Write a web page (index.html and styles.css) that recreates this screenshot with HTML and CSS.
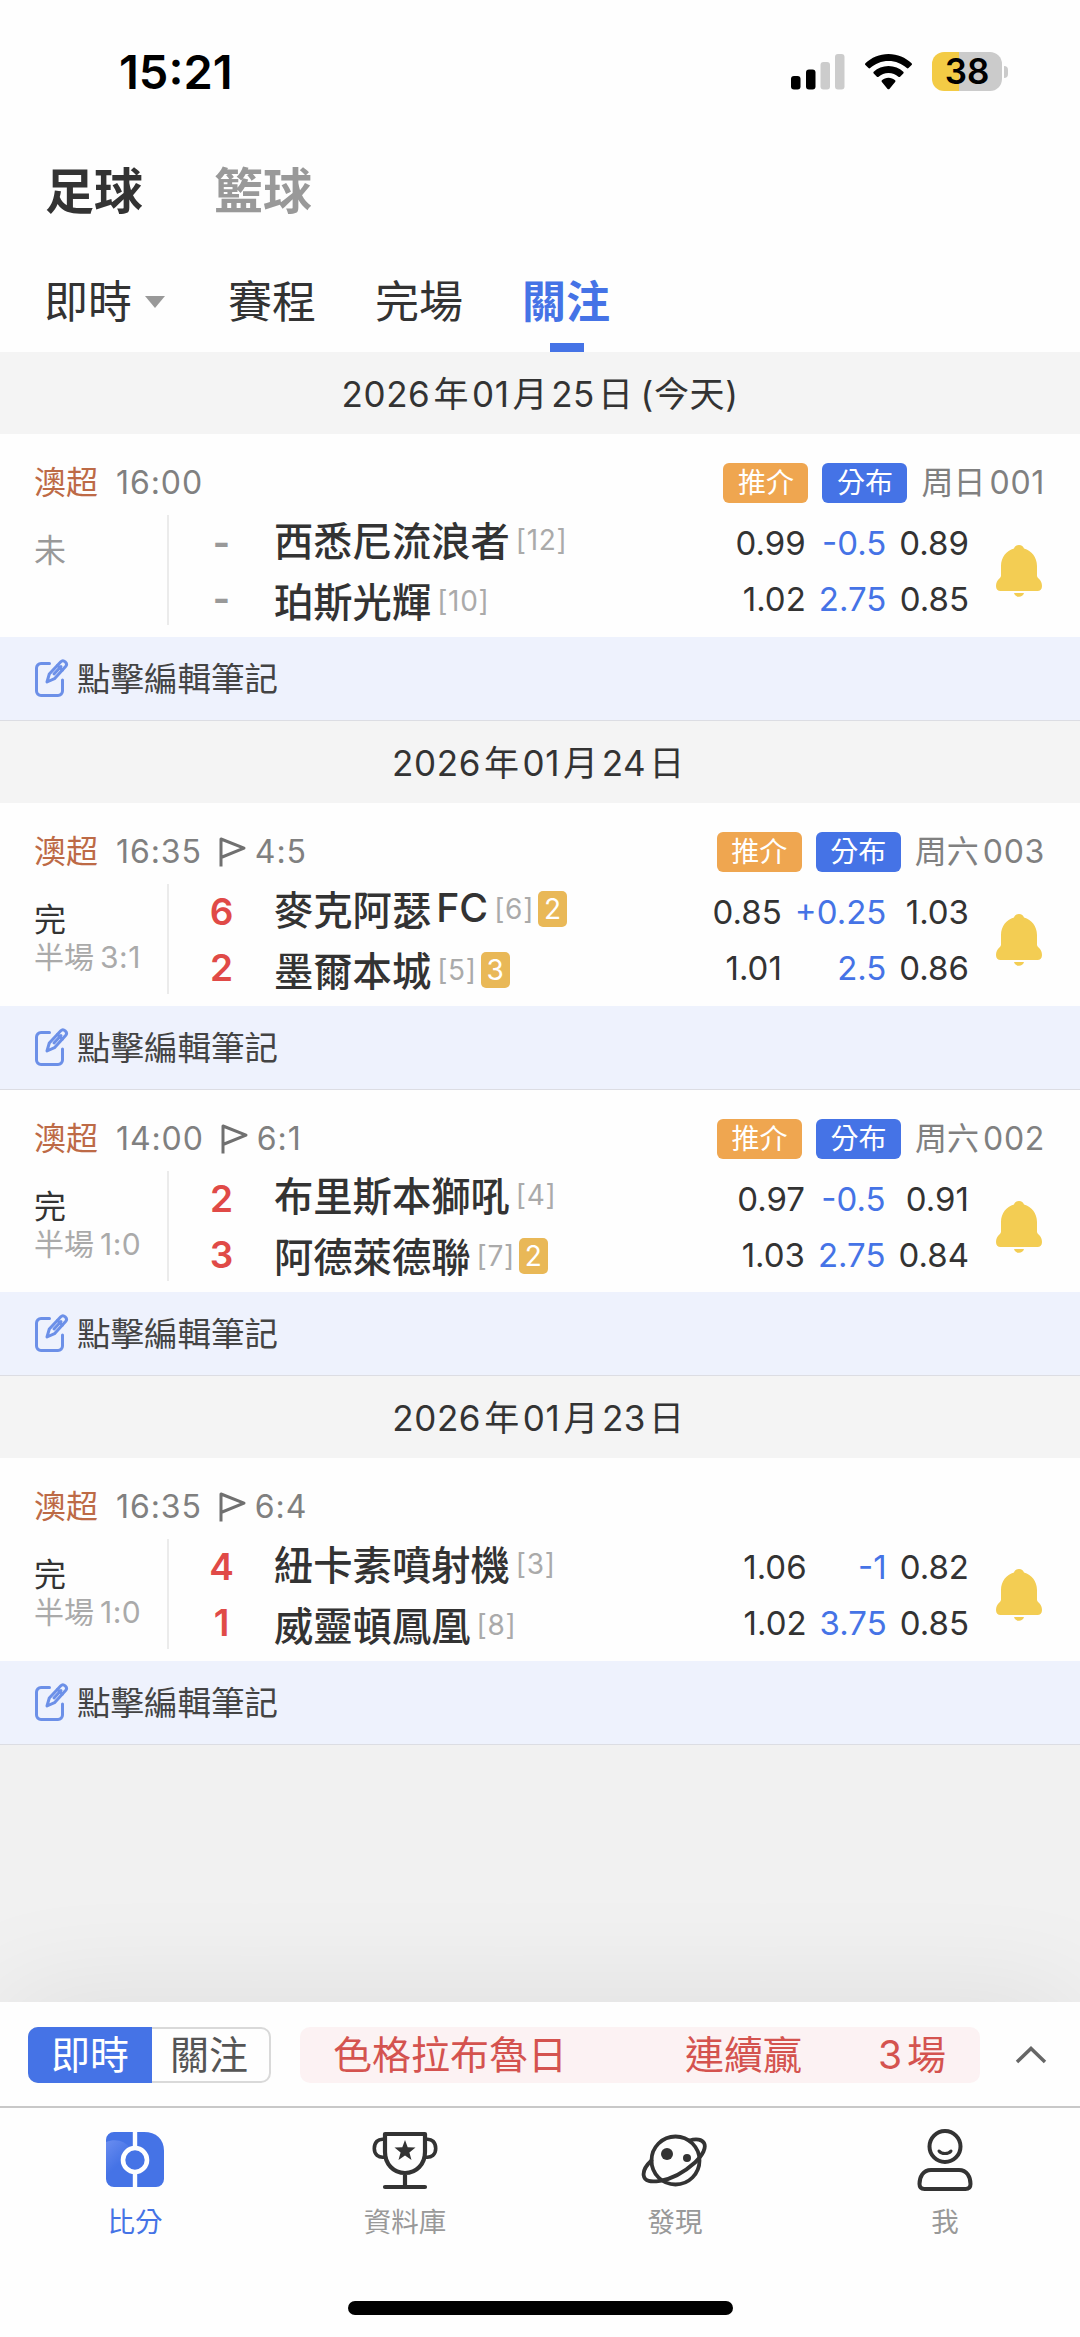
FILE: index.html
```html
<!DOCTYPE html>
<html lang="zh-Hant">
<head>
    <meta charset="UTF-8">
    <meta name="viewport" content="width=device-width, initial-scale=1.0">
    <title>足球比分 - 關注</title>
    <link rel="stylesheet" href="styles.css">
</head>
<body>
    <!-- Shared icons -->
    <svg class="sprite">
        <symbol id="bell" viewBox="0 0 46 52">
            <path d="M23 0c-2.600 0-4.500 1.500-5 3.600C10.300 5.800 5 12.500 5 21v9.500c0 1.200-.5 2-1.600 3C1.300 35.400 0 37.800 0 41c0 3.300 1.800 5 4.600 5h36.800c2.800 0 4.600-1.700 4.600-5 0-3.200-1.300-5.600-3.400-7.500-1.100-1-1.600-1.800-1.600-3V21C41 12.500 35.700 5.800 28 3.600 27.500 1.500 25.600 0 23 0z"/>
            <path d="M18 48h10c-.8 2.500-2.600 3.800-5 3.800S18.800 50.500 18 48z"/>
        </symbol>
        <symbol id="edit" viewBox="0 0 34 38">
            <path d="M14.500 4.500H6A4.500 4.500 0 0 0 1.500 9v23A4.500 4.500 0 0 0 6 36.500h17a4.500 4.500 0 0 0 4.500-4.500V21"/>
            <path d="M12 23l2.300-8L25.800 2.700c2.700-2.700 7.400 1.500 5 4.500L19.500 19.700z"/>
            <path d="M22.500 6.500l5 4.600"/>
            <path d="M19 15l7-7.500"/>
        </symbol>
        <symbol id="flag" viewBox="0 0 28 30">
            <path d="M3 29.500V2L26 11.200 3 20.500"/>
        </symbol>
    </svg>

    <header>
        <div class="status-bar">
            <span class="clock">15:21</span>
            <div class="status-icons">
                <svg class="signal" viewBox="0 0 54 36">
                    <rect x="0" y="22" width="9.500" height="13.500" rx="3"/>
                    <rect x="15" y="15.500" width="9.500" height="20" rx="3"/>
                    <rect class="off" x="29.500" y="8" width="9.500" height="27.500" rx="3"/>
                    <rect class="off" x="44" y="0" width="9.500" height="35.500" rx="3"/>
                </svg>
                <svg class="wifi" viewBox="0 0 47 36">
                    <path d="M23.500 0C14.500 0 6.400 3.500.4 9.300c-.5.500-.5 1.200 0 1.700l3.100 3.100c.5.500 1.200.5 1.700 0C10 9.500 16.400 6.900 23.500 6.900S37 9.500 41.800 14.100c.5.500 1.200.5 1.700 0l3.100-3.100c.5-.5.5-1.200 0-1.700C40.600 3.500 32.500 0 23.500 0z"/>
                    <path d="M23.500 12c-5.700 0-10.900 2.200-14.800 5.800-.5.500-.5 1.200 0 1.700l3.200 3.200c.5.500 1.200.5 1.700 0 2.600-2.400 6.100-3.800 9.900-3.800s7.300 1.400 9.900 3.800c.5.500 1.200.5 1.700 0l3.200-3.200c.5-.5.5-1.200 0-1.700C34.400 14.200 29.200 12 23.500 12z"/>
                    <path d="M23.500 23.800c-2.500 0-4.800.9-6.600 2.500-.5.500-.5 1.200 0 1.700l5.700 6.900c.5.600 1.300.6 1.800 0L30.100 28c.5-.5.5-1.200 0-1.700-1.800-1.600-4.100-2.500-6.600-2.500z"/>
                </svg>
                <div class="battery">38</div>
                <div class="battery-tip"></div>
            </div>
        </div>
        <nav class="sports">
            <a class="active">足球</a>
            <a>籃球</a>
        </nav>
        <nav class="tabs">
            <a>即時<i class="caret"></i></a>
            <a>賽程</a>
            <a>完場</a>
            <a class="active">關注</a>
        </nav>
    </header>

    <main>
        <h2 class="date">2026<b>年</b>01<b>月</b>25<b>日</b><em>(今天)</em></h2>
        <section class="match">
            <div class="match-head">
                <span class="league">澳超</span>
                <span class="time">16:00</span>
                <div class="match-tags">
                    <span class="tag tip">推介</span>
                    <span class="tag dist">分布</span>
                    <span class="serial">周日<em>001</em></span>
                </div>
            </div>
            <div class="match-body">
                <div class="state pending">未</div>
                <div class="score none"><span>-</span><span>-</span></div>
                <div class="teams">
                    <div class="team">西悉尼流浪者<span class="rank">[12]</span></div>
                    <div class="team">珀斯光輝<span class="rank">[10]</span></div>
                </div>
                <div class="odds">
                    <span>0.99</span><span class="line">-0.5</span><span>0.89</span>
                    <span>1.02</span><span class="line">2.75</span><span>0.85</span>
                </div>
                <svg class="bell"><use href="#bell"/></svg>
            </div>
        </section>
        <div class="note"><svg class="edit"><use href="#edit"/></svg><span>點擊編輯筆記</span></div>

        <h2 class="date">2026<b>年</b>01<b>月</b>24<b>日</b></h2>
        <section class="match">
            <div class="match-head">
                <span class="league">澳超</span>
                <span class="time">16:35</span>
                <svg class="flag"><use href="#flag"/></svg>
                <span class="corner">4:5</span>
                <div class="match-tags">
                    <span class="tag tip">推介</span>
                    <span class="tag dist">分布</span>
                    <span class="serial">周六<em>003</em></span>
                </div>
            </div>
            <div class="match-body">
                <div class="state">完<small>半場<em>3:1</em></small></div>
                <div class="score"><span>6</span><span>2</span></div>
                <div class="teams">
                    <div class="team">麥克阿瑟<em>FC</em><span class="rank">[6]</span><span class="card">2</span></div>
                    <div class="team">墨爾本城<span class="rank">[5]</span><span class="card">3</span></div>
                </div>
                <div class="odds">
                    <span>0.85</span><span class="line">+0.25</span><span>1.03</span>
                    <span>1.01</span><span class="line">2.5</span><span>0.86</span>
                </div>
                <svg class="bell"><use href="#bell"/></svg>
            </div>
        </section>
        <div class="note"><svg class="edit"><use href="#edit"/></svg><span>點擊編輯筆記</span></div>

        <section class="match">
            <div class="match-head">
                <span class="league">澳超</span>
                <span class="time">14:00</span>
                <svg class="flag"><use href="#flag"/></svg>
                <span class="corner">6:1</span>
                <div class="match-tags">
                    <span class="tag tip">推介</span>
                    <span class="tag dist">分布</span>
                    <span class="serial">周六<em>002</em></span>
                </div>
            </div>
            <div class="match-body">
                <div class="state">完<small>半場<em>1:0</em></small></div>
                <div class="score"><span>2</span><span>3</span></div>
                <div class="teams">
                    <div class="team">布里斯本獅吼<span class="rank">[4]</span></div>
                    <div class="team">阿德萊德聯<span class="rank">[7]</span><span class="card">2</span></div>
                </div>
                <div class="odds">
                    <span>0.97</span><span class="line">-0.5</span><span>0.91</span>
                    <span>1.03</span><span class="line">2.75</span><span>0.84</span>
                </div>
                <svg class="bell"><use href="#bell"/></svg>
            </div>
        </section>
        <div class="note"><svg class="edit"><use href="#edit"/></svg><span>點擊編輯筆記</span></div>

        <h2 class="date">2026<b>年</b>01<b>月</b>23<b>日</b></h2>
        <section class="match">
            <div class="match-head">
                <span class="league">澳超</span>
                <span class="time">16:35</span>
                <svg class="flag"><use href="#flag"/></svg>
                <span class="corner">6:4</span>
            </div>
            <div class="match-body">
                <div class="state">完<small>半場<em>1:0</em></small></div>
                <div class="score"><span>4</span><span>1</span></div>
                <div class="teams">
                    <div class="team">紐卡素噴射機<span class="rank">[3]</span></div>
                    <div class="team">威靈頓鳳凰<span class="rank">[8]</span></div>
                </div>
                <div class="odds">
                    <span>1.06</span><span class="line">-1</span><span>0.82</span>
                    <span>1.02</span><span class="line">3.75</span><span>0.85</span>
                </div>
                <svg class="bell"><use href="#bell"/></svg>
            </div>
        </section>
        <div class="note"><svg class="edit"><use href="#edit"/></svg><span>點擊編輯筆記</span></div>
    </main>

    <div class="live-bar">
        <div class="switch">
            <span class="on">即時</span>
            <span>關注</span>
        </div>
        <div class="streak">
            <span class="streak-team">色格拉布魯日</span>
            <span>連續贏</span>
            <span class="streak-count"><em>3</em>場</span>
        </div>
        <svg class="chevron" viewBox="0 0 32 18"><path d="M2 16L16 2.500 30 16"/></svg>
    </div>

    <footer>
        <nav class="bottom-nav">
            <a class="active">
                <svg viewBox="0 0 68 64">
                    <defs>
                        <linearGradient id="shine" x1="0" y1="0" x2="0.600" y2="1">
                            <stop offset="0" stop-color="#6a8df0"/>
                            <stop offset="0.700" stop-color="#4573e6"/>
                        </linearGradient>
                    </defs>
                    <path d="M13 4h30c12 0 20 7 20 19v28a8 8 0 0 1-8 8H13a8 8 0 0 1-8-8V12a8 8 0 0 1 8-8z" fill="#4573e6"/>
                    <path d="M5 14c10-4 19-1 24 6l-5 30H5z" fill="url(#shine)"/>
                    <path d="M34 3v17M34 46v14" stroke="#fefefe" stroke-width="4.400"/>
                    <circle cx="34" cy="32" r="12" fill="#4573e6" stroke="#fefefe" stroke-width="4.600"/>
                </svg>
                比分
            </a>
            <a>
                <svg class="stroke" viewBox="0 0 68 64">
                    <path d="M14 6h40v18c0 12-8.500 21-20 21s-20-9-20-21zM34 45v13M14 59h40" stroke-width="4.200"/>
                    <path d="M14 11.500C6.500 10 3.300 15 3.300 20.500S7 30.500 14.500 29M54 11.500c7.500-1.500 10.700 3.500 10.700 9s-3.700 10-11.200 8.500" stroke-width="3.600"/>
                    <path class="solid" d="M34 12l2.700 7.300 7.800.3-6.100 4.800 2.100 7.500-6.500-4.300-6.500 4.300 2.100-7.500-6.100-4.800 7.800-.3z"/>
                </svg>
                資料庫
            </a>
            <a>
                <svg class="stroke" viewBox="0 0 68 64">
                    <circle cx="34.500" cy="32.500" r="24" stroke-width="3.800"/>
                    <path d="M48.500 12.500c7-2.300 12.500-1 14.500 2.500 2.500 4.500-1 12-9 19.500C44 43.500 31 51 19 52.800 10 54.200 3.500 53.500 2.700 47.500 2 43 5 37.500 10.500 32.500" stroke-width="3.800"/>
                    <circle class="solid" cx="26" cy="26" r="6"/>
                    <circle class="solid" cx="46" cy="30" r="4"/>
                </svg>
                發現
            </a>
            <a>
                <svg class="stroke" viewBox="0 0 68 64">
                    <circle cx="34" cy="18.500" r="15.500" stroke-width="4"/>
                    <path d="M28 23c2.500 3.400 9.500 3.400 12 0" stroke-width="3"/>
                    <path d="M20 42h28c8 0 11.500 7 11.500 14 0 3-1.500 5-5 5h-41c-3.500 0-5-2-5-5 0-7 3.500-14 11.500-14z" stroke-width="4"/>
                </svg>
                我
            </a>
        </nav>
        <div class="home-indicator"></div>
    </footer>
</body>
</html>
```
FILE: styles.css
```css
:root {
    --primary: #4573e6;
    --text: #333;
    --muted: #808080;
    --light: #aaa;
    --red: #e04a47;
}

* {
    margin: 0;
    padding: 0;
    box-sizing: border-box;
}

body {
    height: 2337px;
    display: flex;
    flex-direction: column;
    background: #f1f1f1;
    color: var(--text);
    font-family: Inter, 'Noto Sans CJK TC', sans-serif;
    overflow: hidden;
}

em {
    font-style: normal;
}

.sprite {
    position: absolute;
    width: 0;
    height: 0;
}

/* Header */
header {
    height: 352px;
    flex: none;
    background: #fefefe;
}

.status-bar {
    display: flex;
    justify-content: space-between;
    height: 144px;
    padding: 44px 72px 0 119px;
}

.clock {
    font-size: 47px;
    font-weight: 600;
    line-height: 56px;
    color: #000;
}

.status-icons {
    display: flex;
    align-items: center;
    height: 55px;
}

.signal {
    width: 54px;
    height: 36px;
    margin-right: 20px;
}

.signal .off {
    fill: #ccc;
}

.wifi {
    width: 47px;
    height: 36px;
    margin-right: 20px;
}

.battery {
    width: 70px;
    height: 39px;
    border-radius: 12px;
    background: linear-gradient(90deg, #f3cb45 27px, #cbcbcb 27px);
    color: #000;
    font-size: 35px;
    font-weight: 600;
    line-height: 39px;
    text-align: center;
}

.battery-tip {
    width: 4px;
    height: 12px;
    margin-left: 2px;
    border-radius: 0 4px 4px 0;
    background: #cbcbcb;
}

.sports {
    display: flex;
    gap: 71px;
    height: 94px;
    padding-left: 45px;
    font-size: 49px;
    font-weight: 700;
    line-height: 95px;
    color: #999;
}

.sports .active {
    color: var(--text);
}

.tabs {
    display: flex;
    height: 114px;
    padding-left: 44px;
    gap: 59px;
    font-size: 44px;
    line-height: 128px;
}

.tabs a {
    display: flex;
    align-items: center;
    height: 128px;
}

.tabs .active {
    position: relative;
    color: var(--primary);
    font-weight: 700;
}

.tabs .active::after {
    content: '';
    position: absolute;
    left: 28px;
    top: 105px;
    width: 34px;
    height: 9px;
    background: var(--primary);
}

.caret {
    margin: 0 4px 0 13px;
    border: 10px solid transparent;
    border-top: 12px solid #999;
    border-bottom: 0;
}

/* Match list */
.date {
    height: 82.4px;
    background: #f4f4f4;
    font-size: 35px;
    font-weight: 400;
    line-height: 84px;
    text-align: center;
    letter-spacing: 0.6px;
}

.date b {
    font-weight: 400;
    margin: 0 3px;
}

.date em {
    margin-left: 4px;
}

.match {
    height: 202.4px;
    padding: 29px 35px 0 34px;
    background: #fefefe;
}

.match-head {
    display: flex;
    align-items: center;
    height: 40px;
    font-size: 32px;
    line-height: 42px;
    color: var(--muted);
}

.league {
    color: #bd6a46;
}

.time {
    margin-left: 18px;
    letter-spacing: 0.9px;
}

.corner {
    letter-spacing: 0.9px;
}

.flag {
    width: 28px;
    height: 30px;
    margin: 0 9px 0 16px;
    fill: none;
    stroke: #707070;
    stroke-width: 3;
    stroke-linejoin: round;
}

.match-tags {
    display: flex;
    align-items: center;
    margin-left: auto;
}

.tag {
    width: 85px;
    height: 40px;
    margin-right: 14px;
    border-radius: 6px;
    color: #fff;
    font-size: 28px;
    line-height: 41px;
    text-align: center;
}

.tip {
    background: #efa650;
}

.dist {
    background: var(--primary);
}

.serial em {
    margin-left: 4px;
    letter-spacing: 0.7px;
}

.match-body {
    display: flex;
    height: 110px;
    margin-top: 12px;
}

.state {
    width: 135px;
    padding-top: 17px;
    border-right: 2px solid #ebebeb;
    font-size: 32px;
    line-height: 38px;
}

.state.pending {
    color: #999;
}

.state small {
    display: block;
    color: var(--light);
    font-size: 30px;
    line-height: 36px;
}

.state small em {
    margin-left: 6px;
    letter-spacing: 0.5px;
}

.score {
    display: flex;
    flex-direction: column;
    width: 105px;
    color: var(--red);
    font-size: 37px;
    font-weight: 600;
    line-height: 56px;
    text-align: center;
}

.score.none {
    color: #999;
    font-weight: 700;
}

.teams {
    display: flex;
    flex-direction: column;
    justify-content: center;
}

.team {
    display: flex;
    align-items: center;
    height: 61px;
    flex: none;
    padding-bottom: 3px;
    font-size: 39.3px;
    font-weight: 500;
}

.team em {
    margin-left: 5px;
}

.rank {
    margin: 3px 0 0 6px;
    color: var(--light);
    font-size: 28px;
    font-weight: 400;
    letter-spacing: 0.7px;
}

.card {
    width: 29px;
    height: 36px;
    margin: 3px 0 0 4px;
    border-radius: 5px;
    background: #e9b857;
    color: #fff;
    font-size: 28px;
    font-weight: 400;
    line-height: 37px;
    text-align: center;
}

.odds {
    display: grid;
    grid-template-columns: repeat(3, auto);
    column-gap: 13px;
    margin-left: auto;
    font-size: 33px;
    line-height: 56px;
    text-align: right;
}

.odds .line {
    color: var(--primary);
}

.bell {
    width: 46px;
    height: 52px;
    margin: 30px 3px 0 27px;
    fill: #f3cd53;
}

.note {
    display: flex;
    align-items: center;
    height: 84px;
    padding-left: 35px;
    border-bottom: 1px solid #dcdde3;
    background: #eef2fd;
    color: #444;
    font-size: 33.5px;
}

.note span {
    padding-bottom: 3px;
}

.edit {
    width: 34px;
    height: 38px;
    margin-right: 8px;
    fill: none;
    stroke: #6c90e8;
    stroke-width: 3;
    stroke-linecap: round;
    stroke-linejoin: round;
}

/* Live bar */
.live-bar {
    display: flex;
    align-items: center;
    height: 104px;
    margin-top: auto;
    flex: none;
    padding: 2px 33px 0 28px;
    background: #fefefe;
    box-shadow: 0 0 120px rgba(0, 0, 0, 0.09);
    font-size: 39px;
}

.switch {
    display: flex;
    width: 243px;
    height: 56px;
    border: 2px solid #d9d9d9;
    border-radius: 10px;
    color: #555;
    line-height: 52px;
    text-align: center;
}

.switch span {
    flex: 1;
    padding-right: 3px;
}

.switch .on {
    flex: none;
    width: 124px;
    margin: -2px 0 -2px -2px;
    padding: 0;
    border-radius: 10px 0 0 10px;
    background: var(--primary);
    color: #fff;
    line-height: 56px;
}

.streak {
    display: flex;
    width: 680px;
    height: 56px;
    margin-left: 29px;
    padding: 0 34px 0 33px;
    border-radius: 10px;
    background: #fcf2f3;
    color: #d4534f;
    line-height: 56px;
}

.streak-team {
    width: 352px;
}

.streak-count {
    margin-left: auto;
}

.streak-count em {
    margin-right: 5px;
}

.chevron {
    width: 32px;
    height: 18px;
    margin-left: auto;
    fill: none;
    stroke: #666;
    stroke-width: 3.5;
}

/* Bottom navigation */
footer {
    position: relative;
    height: 231px;
    flex: none;
    border-top: 2px solid #c8c8c8;
    background: #fefefe;
}

.bottom-nav {
    display: flex;
}

.bottom-nav a {
    flex: 1;
    display: flex;
    flex-direction: column;
    align-items: center;
    padding-top: 20px;
    color: #999;
    font-size: 27.5px;
    line-height: 34px;
}

.bottom-nav .active {
    color: var(--primary);
}

.bottom-nav svg {
    width: 68px;
    height: 64px;
    margin-bottom: 13px;
}

.stroke {
    fill: none;
    stroke: var(--text);
    stroke-linecap: round;
    stroke-linejoin: round;
}

.stroke .solid {
    fill: var(--text);
    stroke: none;
}

.home-indicator {
    width: 385px;
    height: 14px;
    margin: 62px auto 0;
    border-radius: 7px;
    background: #000;
}
```
